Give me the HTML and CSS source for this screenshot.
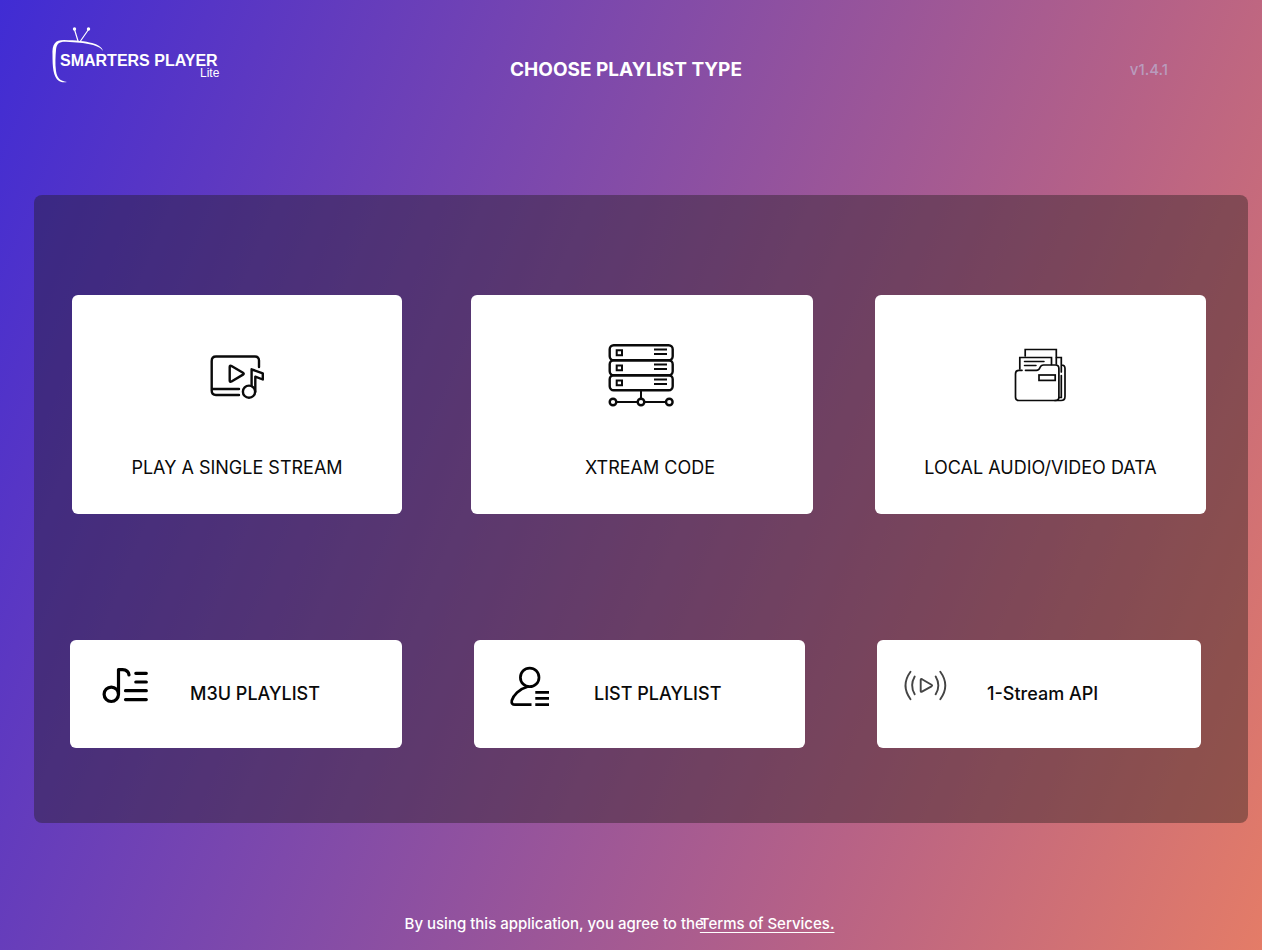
FILE: index.html
```html
<!DOCTYPE html>
<html lang="en">
<head>
    <meta charset="UTF-8">
    <meta name="viewport" content="width=device-width, initial-scale=1.0">
    <title>Smarters Player Lite</title>
    <link rel="stylesheet" href="styles.css">
</head>
<body>
    <header class="header">
        <svg class="logo" viewBox="0 0 172 60" role="img" aria-label="Smarters Player Lite">
            <g fill="none" stroke="#fff" stroke-linecap="round">
                <path d="M26 15 L22.500 3.500 M28.500 15 L36.500 3.500" stroke-width="1.200"/>
            </g>
            <circle cx="22.500" cy="3" r="1.700" fill="#fff"/>
            <circle cx="36.500" cy="3" r="1.700" fill="#fff"/>
            <path d="M51 25 C50 18 36 14.500 12 14 C3 14 0 18 .500 29 C.500 40 1 51 7 55 C9 56.300 12 56.400 15 56 C8 55 5 52 4 45 C3 38 3.500 30 4 24 C4.500 17.500 7 15.500 14 15.700 C34 16.500 48 19 51 25 Z" fill="#fff"/>
            <text class="logo-name" x="8" y="40">SMARTERS PLAYER</text>
            <text class="logo-lite" x="148" y="51">Lite</text>
        </svg>
        <h1 class="title">CHOOSE PLAYLIST TYPE</h1>
        <span class="version">v1.4.1</span>
    </header>

    <main class="panel">
        <div class="row row-large">
            <button class="card" type="button">
                <svg class="card-icon" viewBox="0 0 72 72" fill="none" stroke="#0a0a0a" stroke-width="2.400" stroke-linecap="round" stroke-linejoin="round" aria-hidden="true">
                    <path d="M58 27 V20.500 Q58 16.500 54 16.500 H15 Q10.700 16.500 10.700 21 V50.500 Q10.700 55 15 55 H38 M11 49 H38"/>
                    <path d="M28.700 27 Q28.700 25 30.500 26 L42 32.800 Q43.500 33.700 42 34.600 L30.500 41.500 Q28.700 42.500 28.700 40.500 Z"/>
                    <circle cx="48" cy="51.700" r="6.100"/>
                    <path d="M50.600 46 V29.300 L61.800 33.300 V39.500 L54.300 36.700 V51.700"/>
                </svg>
                <span class="card-label">PLAY A SINGLE STREAM</span>
            </button>
            <button class="card card-wide" type="button">
                <svg class="card-icon" viewBox="0 0 72 72" fill="none" stroke="#0a0a0a" stroke-width="2.400" aria-hidden="true">
                    <rect x="3.700" y="5.300" width="63" height="15" rx="4"/>
                    <rect x="3.700" y="20.300" width="63" height="15" rx="4"/>
                    <rect x="3.700" y="35.300" width="63" height="15" rx="4"/>
                    <path d="M10.700 10.300 h5.300 v4.900 h-5.300 Z M10.700 25.400 h5.300 v4.900 h-5.300 Z M10.700 40.400 h5.300 v4.900 h-5.300 Z" stroke-width="2"/>
                    <path d="M48 9.500 H61 M48 13.900 H61 M48 24.500 H61 M48 28.900 H61 M48 39.500 H61 M48 43.900 H61" stroke-width="2"/>
                    <path d="M35 50 V58.500 M10.300 62 H31.700 M38.300 62 H60" stroke-width="2"/>
                    <circle cx="7" cy="62" r="3.300"/>
                    <circle cx="35" cy="62" r="3.300"/>
                    <circle cx="63.300" cy="62" r="3.300"/>
                </svg>
                <span class="card-label">XTREAM CODE</span>
            </button>
            <button class="card" type="button">
                <svg class="card-icon" viewBox="0 0 72 72" fill="none" stroke="#0a0a0a" stroke-width="1.700" stroke-linecap="round" aria-hidden="true">
                    <path d="M20.200 16 V9.500 H51.300 V24"/>
                    <path d="M14.800 29 V17.500 H46.500 V24.500"/>
                    <path d="M19.500 21.500 H39 M19.500 25.500 H31" stroke-width="1.500"/>
                    <path d="M17 30.300 H14 Q10.500 30.300 10.500 34 V57 Q10.500 60.500 14 60.500 H50.500 Q53.900 60.500 53.900 57 V28.500 Q53.900 25 50.500 25 H38.500 Q36 25 35 27.500 Q34 30.300 31.500 30.300 H20.500"/>
                    <rect x="34" y="35" width="16.200" height="5.400"/>
                    <path d="M51.500 17.500 H56.300 V32 M56.300 35.500 V57.500 H54 M56.500 25 Q60 25 60 28.500 V56.500 Q60 60.500 56 60.500 H50"/>
                </svg>
                <span class="card-label">LOCAL AUDIO/VIDEO DATA</span>
            </button>
        </div>

        <div class="row row-small">
            <button class="tile" type="button">
                <svg class="tile-icon" viewBox="0 0 48 44" fill="none" stroke="#000" stroke-width="3.200" stroke-linecap="round" stroke-linejoin="round" aria-hidden="true">
                    <circle cx="9.300" cy="30.300" r="7.200"/>
                    <path d="M16.500 30 V5.600 H20.500 Q26.500 6 27 11"/>
                    <path d="M33.800 9.300 H44.300 M33.800 18 H44.300 M23.500 26.700 H44.300 M23.500 35.600 H44.300"/>
                </svg>
                <span class="tile-label">M3U PLAYLIST</span>
            </button>
            <button class="tile" type="button">
                <svg class="tile-icon" viewBox="0 0 48 44" fill="none" stroke="#000" stroke-width="2.700" aria-hidden="true">
                    <circle cx="23.700" cy="13.400" r="9.300"/>
                    <path d="M21.500 22.700 C13 25 7.500 31 5.800 36.500 Q5 40.600 9 40.600 H25.500"/>
                    <path d="M29.300 28.300 H43 M29.300 34.400 H43 M29.300 40.600 H43"/>
                </svg>
                <span class="tile-label">LIST PLAYLIST</span>
            </button>
            <button class="tile tile-narrow" type="button">
                <svg class="tile-icon" viewBox="0 0 48 44" fill="none" stroke="#444" stroke-width="1.900" stroke-linecap="round" stroke-linejoin="round" aria-hidden="true">
                    <path d="M11.500 7.800 Q1.500 21.500 11.500 35.200 M15.700 12.500 Q10.500 21.500 15.700 30.300"/>
                    <path d="M36.700 12.500 Q42 21.500 36.700 30.300 M41.300 7.800 Q51.300 21.500 41.300 35.200"/>
                    <path d="M21.700 16 Q21.700 14.500 23 15.200 L32.500 20.700 Q33.800 21.500 32.500 22.300 L23 27.600 Q21.700 28.300 21.700 27 Z"/>
                </svg>
                <span class="tile-label">1-Stream API</span>
            </button>
        </div>
    </main>

    <footer class="footer">
        <span>By using this application, you agree to the</span><a class="terms" href="#terms">Terms of Services.</a>
    </footer>
</body>
</html>
```
FILE: styles.css
```css
* {
    margin: 0;
    padding: 0;
    box-sizing: border-box;
}

body {
    display: flex;
    flex-direction: column;
    min-height: 100vh;
    font-family: Inter, 'Liberation Sans', sans-serif;
    color: #fff;
    background: linear-gradient(112deg, #402cd4 0%, #5635c6 13%, #844ca7 42%, #b76286 72%, #e47c67 100%);
}

.header {
    display: grid;
    grid-template-columns: 1fr auto 1fr;
    align-items: center;
    min-height: 140px;
    padding: 0 62px 0 52px;
}

.logo {
    width: 172px;
    height: 60px;
    margin-bottom: 28px;
    overflow: visible;
}

.logo text {
    font-family: 'Liberation Sans', Arial, sans-serif;
    fill: #fff;
}

.logo .logo-name {
    font-size: 16px;
    font-weight: 700;
}

.logo .logo-lite {
    font-size: 12px;
}

.title {
    font-size: 19px;
    font-weight: 700;
    line-height: 24px;
}

.version {
    justify-self: end;
    margin-right: 32px;
    font-size: 15px;
    font-weight: 500;
    line-height: 20px;
    color: #b99bbd;
}

.panel {
    display: flex;
    flex-direction: column;
    gap: 126px;
    margin: 55px 14px 0 34px;
    padding: 100px 0 75px;
    border-radius: 8px;
    background: rgba(32, 28, 24, 0.4);
}

.row {
    display: grid;
}

/* the large row has uneven gutters, so they are tracks of their own */
.row-large {
    grid-template-columns: 330fr 69fr 342fr 62fr 331fr;
    padding: 0 42px 0 38px;
}

.row-large .card:nth-child(2) {
    grid-column: 3;
}

.row-large .card:nth-child(3) {
    grid-column: 5;
}

.row-small {
    grid-template-columns: 332fr 331fr 324fr;
    gap: 72px;
    padding: 0 47px 0 36px;
}

.card,
.tile {
    display: flex;
    align-items: center;
    border: none;
    border-radius: 6px;
    background: #fff;
    font-family: inherit;
    color: #0a0a0a;
    cursor: pointer;
}

.card {
    flex-direction: column;
    gap: 44px;
    padding: 45px 16px 34px;
}

.card-icon {
    width: 72px;
    height: 72px;
}

.card-label {
    font-size: 18px;
    line-height: 24px;
}

.card-wide .card-label {
    padding-left: 16px;
}

.tile {
    gap: 40px;
    min-height: 108px;
    padding: 0 32px;
}

.tile-narrow {
    padding: 0 22px;
}

.tile-icon {
    flex: none;
    width: 48px;
    height: 44px;
    margin-bottom: 16px;
}

.tile-label {
    font-size: 18px;
    font-weight: 500;
    line-height: 24px;
}

.footer {
    display: flex;
    justify-content: center;
    padding: 91px 23px 16px 0;
    font-size: 15px;
    font-weight: 500;
    line-height: 20px;
}

/* the link sits tight over the end of the sentence */
.terms {
    margin-left: -4px;
    color: #fff;
    text-underline-offset: 3px;
}
```
